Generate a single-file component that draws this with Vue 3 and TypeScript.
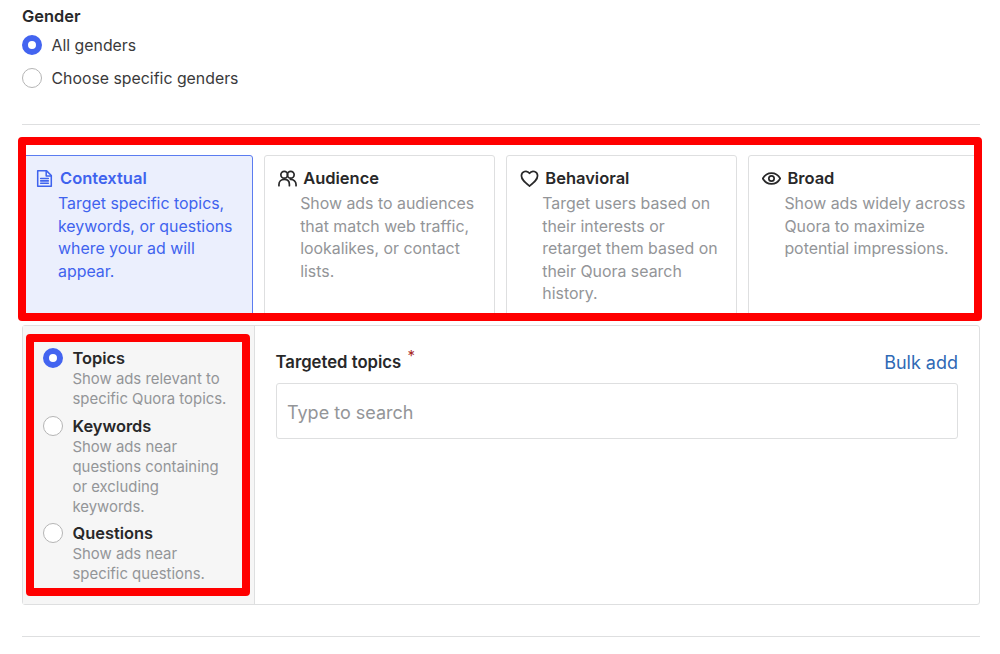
<script setup lang="ts">
interface Card { key: string; title: string; desc: string; active?: boolean }
const cards: Card[] = [
  { key: 'doc', title: 'Contextual', desc: 'Target specific topics, keywords, or questions where your ad will appear.', active: true },
  { key: 'people', title: 'Audience', desc: 'Show ads to audiences that match web traffic, lookalikes, or contact lists.' },
  { key: 'heart', title: 'Behavioral', desc: 'Target users based on their interests or retarget them based on their Quora search history.' },
  { key: 'eye', title: 'Broad', desc: 'Show ads widely across Quora to maximize potential impressions.' },
]
const options = [
  { title: 'Topics', desc: 'Show ads relevant to specific Quora topics.', on: true },
  { title: 'Keywords', desc: 'Show ads near questions containing or excluding keywords.', on: false },
  { title: 'Questions', desc: 'Show ads near specific questions.', on: false },
]
</script>

<template>
  <div class="page">
    <div class="gender">
      <div class="label">Gender</div>
      <div class="choice"><span class="radio on"></span><span class="choice-text">All genders</span></div>
      <div class="choice"><span class="radio"></span><span class="choice-text">Choose specific genders</span></div>
    </div>
    <hr class="rule" />
    <div class="cards">
      <div v-for="c in cards" :key="c.key" class="card" :class="{ active: c.active }">
        <div class="card-head">
          <svg class="icon" viewBox="0 0 20 20" fill="none" stroke="currentColor" stroke-width="1.8" stroke-linejoin="round" stroke-linecap="round">
            <template v-if="c.key === 'doc'">
              <path d="M2 1h10.500L18 6.500V19H2z" />
              <path d="M12 1.500V7h6" />
              <path d="M5.500 10h9M5.500 12.800h9M5.500 15.600h9" />
            </template>
            <template v-else-if="c.key === 'people'">
              <circle cx="6.600" cy="6" r="3.600" />
              <circle cx="13.400" cy="6" r="3.600" />
              <path d="M1 17.500v-1.200c0-3 2.200-5.300 5.600-5.300s5.400 2.300 5.400 5.300v1.200" />
              <path d="M13 11c3.600-.2 6 2.200 6 5.300v1.200" />
            </template>
            <template v-else-if="c.key === 'heart'">
              <path d="M10 18C5 13.800 1.500 11 1.500 7a4.600 4.600 0 0 1 8.500-2.400A4.600 4.600 0 0 1 18.500 7c0 4-3.500 6.800-8.500 11z" />
            </template>
            <template v-else>
              <path d="M.8 10C3 6.200 6.200 4.300 10 4.300s7 1.900 9.200 5.700c-2.200 3.800-5.400 5.700-9.200 5.700S3 13.800.8 10z" />
              <circle cx="10" cy="10" r="2.800" />
            </template>
          </svg>
          <span class="card-title">{{ c.title }}</span>
        </div>
        <p class="card-desc">{{ c.desc }}</p>
      </div>
    </div>
    <div class="panel">
      <div class="side">
        <div v-for="o in options" :key="o.title" class="opt">
          <span class="radio" :class="{ on: o.on }"></span>
          <div class="opt-text">
            <div class="opt-title">{{ o.title }}</div>
            <div class="opt-desc">{{ o.desc }}</div>
          </div>
        </div>
      </div>
      <div class="main">
        <div class="main-head">
          <span class="field-label">Targeted topics <sup class="req">*</sup></span>
          <span class="bulk">Bulk add</span>
        </div>
        <div class="input">Type to search</div>
      </div>
    </div>
    <hr class="rule bottom" />
    <div class="mark mark-cards"></div>
    <div class="mark mark-side"></div>
  </div>
</template>

<style scoped>
.page {
  position: relative;
  box-sizing: border-box;
  width: 1000px;
  height: 654px;
  padding: 0 20.500px 0 22px;
  overflow: hidden;
  background: #fff;
  color: #282829;
  font-family: Inter, "Liberation Sans", sans-serif;
  font-size: 16px;
}
.gender { padding-top: 6px; }
.label { font-weight: 600; font-size: 16.400px; line-height: 20px; margin-bottom: 2px; }
.choice { display: flex; align-items: center; gap: 10px; height: 33px; font-size: 15.850px; color: #3a3a3b; }
.choice-text { margin-top: 2px; }
.radio {
  box-sizing: border-box;
  flex: none;
  width: 20px;
  height: 20px;
  margin-left: -0.500px;
  border-radius: 50%;
  border: 1px solid #b5b5b5;
  background: #fff;
}
.radio.on { border: 6px solid #4364f0; background: #fff; }
.rule { border: 0; border-top: 1px solid #dedfe0; margin: 30px 0 0; }
.rule.bottom { margin-top: 31px; }
.cards { display: flex; gap: 11px; margin-top: 30px; height: 164px; }
.card {
  box-sizing: border-box;
  flex: 1 1 0;
  padding: 12px 11px 0 13px;
  border: 1px solid #dedfe0;
  border-radius: 3px 3px 0 0;
  color: #282829;
  background: #fff;
}
.card.active { background: #ebeffd; border-color: #5b7cf0; color: #3f63ee; }
.card-head { display: flex; align-items: center; gap: 6px; height: 20px; }
.icon { width: 19px; height: 19px; flex: none; }
.card-title { font-weight: 600; font-size: 16.500px; }
.card-desc { margin: 5px 0 0 22px; font-size: 15.900px; line-height: 22.600px; color: #939598; }
.card.active .card-desc { color: #3f63ee; }
.card.active .icon { width: 17px; height: 17px; margin-right: 1px; }
.panel {
  display: flex;
  box-sizing: border-box;
  height: 280px;
  margin-top: 6px;
  border: 1px solid #dedfe0;
  border-radius: 3px;
}
.side {
  box-sizing: border-box;
  width: 232px;
  flex: none;
  padding: 22px 24px 0 20px;
  background: #f6f6f6;
  border-right: 1px solid #dedfe0;
  display: flex;
  flex-direction: column;
  gap: 6.500px;
}
.opt { display: flex; gap: 10px; }
.opt-title { font-weight: 600; font-size: 16.400px; line-height: 20px; color: #282829; }
.opt-desc { margin-top: 1px; font-size: 14.900px; line-height: 20px; color: #939598; }
.main { flex: 1; padding: 25px 20.500px 0 20.500px; }
.main-head { display: flex; justify-content: space-between; align-items: center; height: 22px; margin-bottom: 10px; }
.field-label { font-weight: 600; font-size: 16.700px; }
.req { margin-left: 2px; color: #a82a26; font-size: 15px; line-height: 0; font-weight: 400; }
.bulk { font-size: 18px; color: #2e69b5; }
.input {
  box-sizing: border-box;
  height: 56px;
  padding: 2px 11px 0 10.500px;
  display: flex;
  align-items: center;
  border: 1px solid #dedfe0;
  border-radius: 3px;
  font-size: 18px;
  color: #939598;
}
.mark {
  position: absolute;
  box-sizing: border-box;
  border-style: solid;
  border-color: #ff0000;
  border-radius: 4px;
  pointer-events: none;
}
.mark-cards { left: 18px; top: 137px; width: 964px; height: 184px; border-width: 8px; }
.mark-side { left: 26px; top: 334px; width: 224px; height: 262px; border-width: 8px; }
</style>
